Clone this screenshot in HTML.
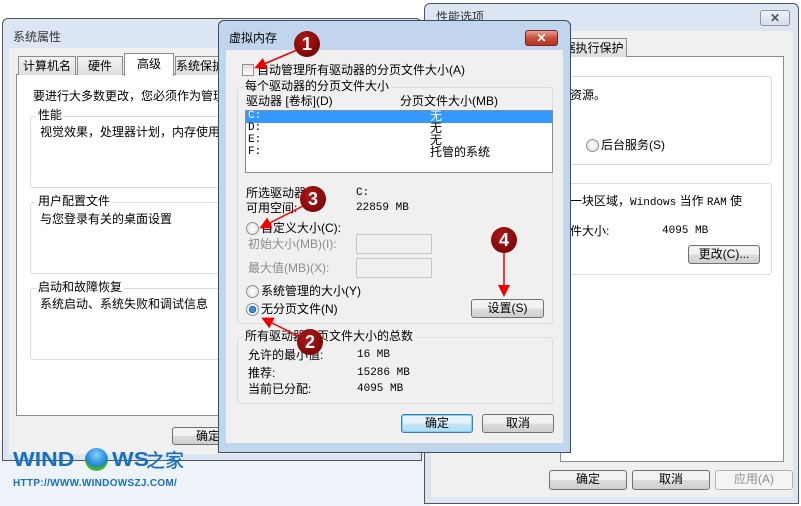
<!DOCTYPE html>
<html><head><meta charset="utf-8"><style>
*{margin:0;padding:0;box-sizing:border-box}
body{width:801px;height:506px;position:relative;overflow:hidden;background:#fff;font-family:"Liberation Sans","Noto Sans CJK SC",sans-serif;font-size:12px;color:#000}
.a{position:absolute;white-space:nowrap;line-height:14px}
.win{position:absolute;border:1px solid #555;border-radius:6px 6px 0 0;background:#dbe6f2}
.cont{position:absolute;background:#f0f0f0}
.white{position:absolute;background:#fff;border:1px solid #898c95}
.grp{position:absolute;border:1px solid #d5dfe5;border-radius:3px}
.lg{position:absolute;background:#f0f0f0;padding:0 2px;line-height:14px;white-space:nowrap}
.lgw{position:absolute;background:#fff;padding:0 2px;line-height:14px;white-space:nowrap}
.btn{position:absolute;border:1px solid #707070;border-radius:3px;background:linear-gradient(#f2f2f2 50%,#dddddd 50%,#cfcfcf);text-align:center;line-height:16px;font-size:12px}
.mono{font-family:"Liberation Mono","Noto Sans CJK SC",monospace;font-size:11px}
.rad{position:absolute;width:13px;height:13px;border-radius:50%;border:1px solid #8f8f8f;background:radial-gradient(#fff,#ddd)}
.dis{color:#8d8d8d}
.inp{position:absolute;border:1px solid #c8c8c8;background:#f0f0f0;width:76px;height:20px}
.c{position:absolute;width:26px;height:26px;border-radius:50%;background:radial-gradient(circle at 40% 35%,#b01818,#6a0000);color:#fff;font:bold 18px "Liberation Sans",sans-serif;text-align:center;line-height:26px}
.tab{position:absolute;border:1px solid #898c95;border-bottom:none;background:linear-gradient(#f3f3f3,#dedede);text-align:center;line-height:18px}
.logo{position:absolute;white-space:nowrap;font:900 20px/20px "Liberation Sans",sans-serif;color:#1a6fc0;transform:scaleX(1.15);transform-origin:left top}
</style></head><body>
<div style="position:absolute;left:0;top:440px;width:430px;height:66px;background:#eef3fa"></div>

<!-- window 1 -->
<div class="win" style="left:2px;top:18px;width:420px;height:443px"></div>
<div class="a" style="left:13px;top:30px;color:#333">系统属性</div>
<div class="cont" style="left:9px;top:48px;width:410px;height:406px"></div>
<div class="white" style="left:16px;top:74px;width:400px;height:342px"></div>
<div class="tab" style="left:18px;top:56px;width:58px;height:19px">计算机名</div>
<div class="tab" style="left:77px;top:56px;width:46px;height:19px">硬件</div>
<div class="tab" style="left:124px;top:53px;width:50px;height:23px;background:#fff;line-height:20px">高级</div>
<div class="tab" style="left:175px;top:56px;width:50px;height:19px">系统保护</div>
<div class="a" style="left:33px;top:89px">要进行大多数更改，您必须作为管理</div>
<div class="grp" style="left:30px;top:116px;width:200px;height:72px"></div>
<div class="lgw" style="left:36px;top:108px">性能</div>
<div class="a" style="left:40px;top:125px">视觉效果，处理器计划，内存使用</div>
<div class="grp" style="left:30px;top:202px;width:200px;height:72px"></div>
<div class="lgw" style="left:36px;top:194px">用户配置文件</div>
<div class="a" style="left:40px;top:212px">与您登录有关的桌面设置</div>
<div class="grp" style="left:30px;top:288px;width:200px;height:72px"></div>
<div class="lgw" style="left:36px;top:280px">启动和故障恢复</div>
<div class="a" style="left:40px;top:297px">系统启动、系统失败和调试信息</div>
<div class="btn" style="left:172px;top:427px;width:72px;height:18px">确定</div>

<!-- window 3 -->
<div class="win" style="left:424px;top:3px;width:375px;height:501px"></div>
<div class="a" style="left:436px;top:10px;color:#333">性能选项</div>
<div style="position:absolute;left:760px;top:10px;width:30px;height:16px;border:1px solid #8a96a5;border-radius:3px;background:linear-gradient(#eef3f9,#d5dee9);text-align:center;font:bold 12px/14px 'Liberation Sans';color:#555">✕</div>
<div class="cont" style="left:431px;top:31px;width:362px;height:466px"></div>
<div class="white" style="left:560px;top:56px;width:224px;height:406px"></div>
<div class="tab" style="left:560px;top:38px;width:67px;height:19px">据执行保护</div>
<div class="grp" style="left:560px;top:76px;width:212px;height:89px"></div>
<div class="a" style="left:570px;top:88px">资源。</div>
<div class="rad" style="left:586px;top:139px"></div>
<div class="a" style="left:601px;top:138px">后台服务(S)</div>
<div class="grp" style="left:560px;top:183px;width:212px;height:92px"></div>
<div class="a" style="left:570px;top:194px">一块区域，<span class="mono">Windows</span> 当作 <span class="mono">RAM</span> 使</div>
<div class="a" style="left:570px;top:224px">件大小:</div>
<div class="a mono" style="left:662px;top:224px">4095 MB</div>
<div class="btn" style="left:688px;top:245px;width:72px;height:19px">更改(C)...</div>
<div class="btn" style="left:549px;top:470px;width:78px;height:20px">确定</div>
<div class="btn" style="left:632px;top:470px;width:78px;height:20px">取消</div>
<div class="btn dis" style="left:715px;top:470px;width:78px;height:20px;border-color:#adb2b5;background:#f4f4f4">应用(A)</div>

<!-- dialog -->
<div style="position:absolute;left:218px;top:20px;width:353px;height:433px;border:1px solid #3a4d66;border-radius:6px 6px 0 0;background:#c1d6ec"></div>
<div class="a" style="left:229px;top:31px">虚拟内存</div>
<div style="position:absolute;left:525px;top:30px;width:33px;height:16px;border:1px solid #6b2a22;border-radius:3px;background:linear-gradient(#e8a093,#c8503c 50%,#b9321f);color:#fff;text-align:center;font:bold 12px/14px 'Liberation Sans'">✕</div>
<div class="cont" style="left:226px;top:50px;width:337px;height:393px"></div>
<div style="position:absolute;left:242px;top:64px;width:12px;height:12px;border:1px solid #8f8f8f;background:linear-gradient(#ddd,#fff)"></div>
<div class="a" style="left:257px;top:63px">自动管理所有驱动器的分页文件大小(A)</div>
<div class="grp" style="left:237px;top:87px;width:316px;height:237px"></div>
<div class="lg" style="left:243px;top:79px">每个驱动器的分页文件大小</div>
<div class="a" style="left:246px;top:94px">驱动器 [卷标](D)</div>
<div class="a" style="left:400px;top:94px">分页文件大小(MB)</div>
<div class="white" style="left:245px;top:110px;width:308px;height:63px"></div>
<div style="position:absolute;left:246px;top:111px;width:306px;height:12px;background:#3399ff"></div>
<div class="a mono" style="left:248px;top:110px;color:#fff;line-height:12px">C:</div>
<div class="a" style="left:430px;top:110px;color:#fff;line-height:12px">无</div>
<div class="a mono" style="left:248px;top:122px;line-height:12px">D:</div>
<div class="a" style="left:430px;top:122px;line-height:12px">无</div>
<div class="a mono" style="left:248px;top:134px;line-height:12px">E:</div>
<div class="a" style="left:430px;top:134px;line-height:12px">无</div>
<div class="a mono" style="left:248px;top:146px;line-height:12px">F:</div>
<div class="a" style="left:430px;top:146px;line-height:12px">托管的系统</div>
<div class="a" style="left:246px;top:186px">所选驱动器:</div>
<div class="a mono" style="left:356px;top:186px">C:</div>
<div class="a" style="left:246px;top:201px">可用空间:</div>
<div class="a mono" style="left:356px;top:201px">22859 MB</div>
<div class="rad" style="left:246px;top:222px"></div>
<div class="a" style="left:261px;top:221px">自定义大小(C):</div>
<div class="a dis" style="left:248px;top:237px">初始大小(MB)(I):</div>
<div class="inp" style="left:356px;top:234px"></div>
<div class="a dis" style="left:248px;top:261px">最大值(MB)(X):</div>
<div class="inp" style="left:356px;top:258px"></div>
<div class="rad" style="left:246px;top:285px"></div>
<div class="a" style="left:261px;top:284px">系统管理的大小(Y)</div>
<div class="rad" style="left:246px;top:303px;background:radial-gradient(#3c8fd8 30%,#1e5aa0 45%,#fff 50%,#ddd)"></div>
<div class="a" style="left:261px;top:302px">无分页文件(N)</div>
<div class="btn" style="left:471px;top:299px;width:73px;height:19px">设置(S)</div>
<div class="grp" style="left:237px;top:337px;width:316px;height:67px"></div>
<div class="lg" style="left:243px;top:329px">所有驱动器分页文件大小的总数</div>
<div class="a" style="left:248px;top:348px">允许的最小值:</div>
<div class="a mono" style="left:357px;top:348px">16 MB</div>
<div class="a" style="left:248px;top:366px">推荐:</div>
<div class="a mono" style="left:357px;top:366px">15286 MB</div>
<div class="a" style="left:248px;top:382px">当前已分配:</div>
<div class="a mono" style="left:357px;top:382px">4095 MB</div>
<div class="btn" style="left:401px;top:414px;width:72px;height:19px;border-color:#3c7fb1;background:linear-gradient(#e5f4fc 50%,#c4e5f6 50%,#b0dcf3);box-shadow:inset 0 0 0 1px #7fd0f5">确定</div>
<div class="btn" style="left:482px;top:414px;width:72px;height:19px">取消</div>

<!-- arrows -->
<svg style="position:absolute;left:0;top:0" width="801" height="506">
<defs><marker id="m" markerWidth="8" markerHeight="8" refX="6" refY="4" orient="auto"><path d="M0,0 L8,4 L0,8 Z" fill="#e00"/></marker></defs>
<g stroke="#e00" stroke-width="1.5" fill="none" marker-end="url(#m)">
<line x1="297" y1="50" x2="257" y2="67"/>
<line x1="303" y1="206" x2="262" y2="227"/>
<line x1="504" y1="253" x2="504" y2="294"/>
<line x1="302" y1="338" x2="264" y2="319"/>
</g></svg>
<div class="c" style="left:294px;top:31px">1</div>
<div class="c" style="left:300px;top:186px">3</div>
<div class="c" style="left:491px;top:227px">4</div>
<div class="c" style="left:297px;top:329px">2</div>

<!-- logo -->
<div class="logo" style="left:13px;top:450px">WIND</div>
<div style="position:absolute;left:85px;top:448px;width:23px;height:23px;border-radius:50%;background:radial-gradient(circle at 50% 30%,#7fd0ff,#1a7fd0 60%,#3aa83a 61%,#6cc04a)"></div>
<div class="logo" style="left:112px;top:450px">WS</div>
<div class="a" style="left:146px;top:449px;font:500 19px/22px 'Noto Sans CJK SC',sans-serif;color:#1a6fc0">之家</div>
<div class="a" style="left:13px;top:478px;font:bold 10px/12px 'Liberation Sans',sans-serif;color:#1a6fc0;letter-spacing:0.3px">HTTP://WWW.WINDOWSZJ.COM/</div>
</body></html>
